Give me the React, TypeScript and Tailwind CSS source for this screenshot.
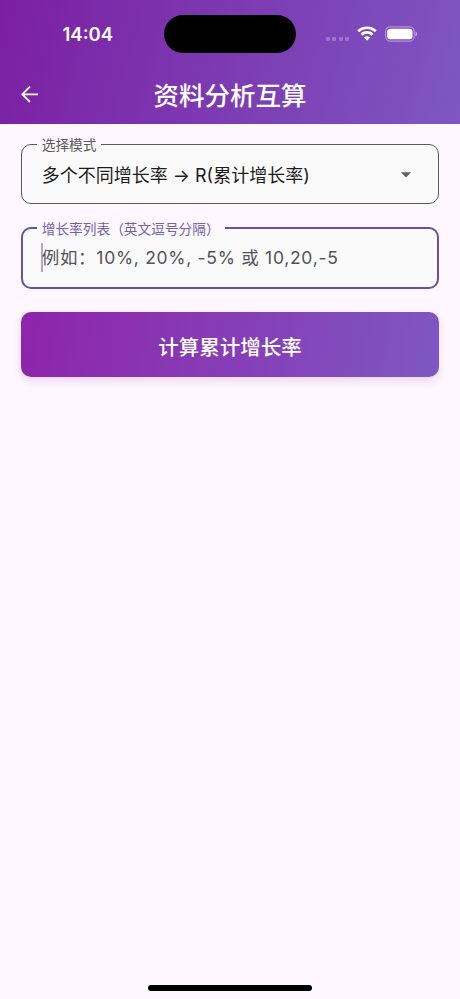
import React, { useState } from 'react';

const StatusBar: React.FC = () => (
  <div className="relative flex h-[67px] items-center justify-between pl-[62.5px] pr-[42px] text-white">
    <span className="font-['Inter'] text-[18.5px] font-semibold leading-6">
      14:04
    </span>
    {/* Dynamic island */}
    <div className="absolute left-[164px] top-[15px] h-[38px] w-[132px] rounded-full bg-black" />
    <div className="flex items-center">
      {/* No signal dots */}
      <div className="mr-2 mt-[10px] flex gap-[2.4px]">
        <i className="size-[4px] rounded-[1.3px] bg-white/25" />
        <i className="size-[4px] rounded-[1.3px] bg-white/25" />
        <i className="size-[4px] rounded-[1.3px] bg-white/25" />
        <i className="size-[4px] rounded-[1.3px] bg-white/25" />
      </div>
      <svg className="mr-2" width="20" height="15" viewBox="0 0 20 15" fill="currentColor">
        <path d="M10 3.1c2.8 0 5.4 1.1 7.4 2.9.2.2.4.2.6 0l1.5-1.5c.2-.2.2-.4 0-.6C14.2-.7 5.8-.7.5 3.9c-.2.2-.2.4 0 .6L2 6c.2.2.4.2.6 0 2-1.8 4.6-2.9 7.4-2.9z" />
        <path d="M10 7.8c1.5 0 3 .6 4.1 1.6.2.2.4.2.6 0l1.5-1.5c.2-.2.2-.5 0-.6-3.5-3.2-8.9-3.2-12.4 0-.2.1-.2.4 0 .6l1.5 1.5c.2.2.4.2.6 0C7 8.4 8.5 7.8 10 7.8z" />
        <path d="M12.9 11.2c.2.2.2.4 0 .6l-2.6 2.6c-.2.2-.4.2-.6 0l-2.6-2.6c-.2-.2-.2-.4 0-.6 1.7-1.4 4.1-1.4 5.8 0z" />
      </svg>
      <svg width="33" height="16" viewBox="0 0 33 16">
        <rect x="0.6" y="0.9" width="28.6" height="14.2" rx="4.5" fill="none" stroke="white" strokeOpacity="0.4" strokeWidth="1.1" />
        <rect x="2.2" y="2.7" width="25.3" height="10.6" rx="3" fill="white" />
        <path d="M30.5 5.6v4.8c1-.4 1.6-1.3 1.6-2.4s-.6-2-1.6-2.4z" fill="white" fillOpacity="0.5" />
      </svg>
    </div>
  </div>
);

const AppBar: React.FC = () => (
  <header className="h-[123.5px] bg-[linear-gradient(105deg,#7b1fa2,#7e57c2)]">
    <StatusBar />
    <div className="flex h-[54px] items-center px-[18px] text-white">
      <button className="w-10" aria-label="返回">
        <svg width="24" height="24" viewBox="0 0 24 24" fill="none" stroke="currentColor" strokeWidth="1.8">
          <path d="M20 12.3H4.5M12 4.6 4.3 12.3l7.7 7.7" />
        </svg>
      </button>
      <h1 className="flex-1 text-center font-['Noto_Sans_CJK_SC',sans-serif] text-[25.5px] font-medium leading-8">
        资料分析互算
      </h1>
      <div className="w-10" />
    </div>
  </header>
);

const App: React.FC = () => {
  const [rates, setRates] = useState<string>('');

  return (
    <div className="flex h-[999px] w-[460px] flex-col bg-[#fef7ff] font-['Inter','Noto_Sans_CJK_SC',sans-serif]">
      <AppBar />

      <main className="flex flex-1 flex-col px-[20.7px] pt-[13.5px]">
        {/* Mode selection */}
        <fieldset className="h-[67px] rounded-[10px] border border-[#5c5861] bg-[#fafafa] pl-[15px] pr-[20px]">
          <legend className="h-[14px] px-[5px] text-[13.7px] leading-[16px] text-[#5a565f]">
            选择模式
          </legend>
          <button className="flex h-[46px] w-full items-center justify-between pl-[5px] text-[18px] leading-6 text-[#1d1b20]">
            <span className="pt-[3px]">多个不同增长率 → R(累计增长率)</span>
            <svg className="mr-[6px] mt-[2px]" width="12" height="6" viewBox="0 0 12 6" fill="#616161">
              <path d="M0.8 0.3h10.4L6 5.5z" />
            </svg>
          </button>
        </fieldset>

        {/* Growth rate list */}
        <fieldset className="mt-[17px] h-[68px] rounded-[10px] border-2 border-[#6750a4] bg-[#fafafa] pl-[14px] pr-[20px]">
          <legend className="h-[14px] px-[5px] text-[13.7px] leading-[16px] text-[#7660ad]">
            增长率列表（英文逗号分隔）
          </legend>
          <div className="ml-[4px] mt-[8px] flex h-[29px] items-center border-l-2 border-[#6750a4]/50">
            <input
              className="-ml-[1px] w-full bg-transparent text-[17.5px] leading-6 tracking-[0.71px] text-[#55515b] outline-none placeholder:text-[#55515b]"
              placeholder="例如：10%, 20%, -5% 或 10,20,-5"
              value={rates}
              onChange={(e) => setRates(e.target.value)}
            />
          </div>
        </fieldset>

        <button className="mt-[23px] h-[65px] rounded-[10px] bg-[linear-gradient(99deg,#8e24aa,#7e57c2)] pt-[7px] text-[20.5px] font-medium text-white shadow-[0_4px_9px_rgba(142,36,170,0.15)]">
          计算累计增长率
        </button>
      </main>

      {/* Home indicator */}
      <div className="mx-auto mb-[8px] h-[6px] w-[164px] rounded-full bg-black" />
    </div>
  );
};

export default App;
